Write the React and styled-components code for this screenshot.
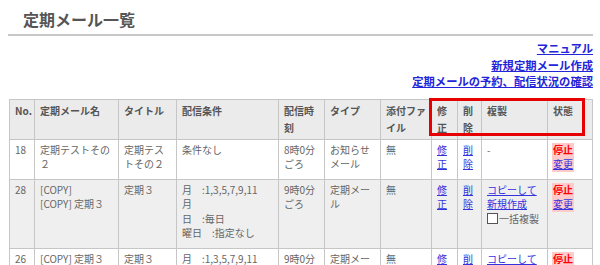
import React from 'react'
import styled, { createGlobalStyle } from 'styled-components'

const GlobalStyle = createGlobalStyle`
  body {
    margin: 0;
    background: #fff;
    font-family: "Noto Sans CJK JP", "Noto Sans", sans-serif;
  }
`

const Page = styled.div`
  width: 600px;
  padding: 0 7px 0 8px;
  box-sizing: border-box;
`

const Title = styled.h1`
  margin: 0;
  padding: 8px 0 4px 15px;
  font-size: 16px;
  line-height: 22px;
  font-weight: 700;
  color: #555;
  border-bottom: 2px solid #c8c8c8;
`

const LinkList = styled.div`
  margin-top: 4px;
  display: flex;
  flex-direction: column;
  align-items: flex-end;
`

const TopLink = styled.a`
  font-size: 11.3px;
  line-height: 16.5px;
  font-weight: 700;
  color: #2424d8;
  text-decoration: underline;
`

const TableWrap = styled.div`
  position: relative;
  margin: 9px 0 0 1px;
`

const Table = styled.table`
  width: 583px;
  table-layout: fixed;
  border-collapse: collapse;
  font-size: 10px;
`

const Row = styled.tr`
  height: ${p => p.$h}px;
  background: ${p => (p.$alt ? '#efefef' : '#fff')};
`

const Th = styled.th`
  background: #ebebeb;
  border: 1px solid #c6c6c6;
  padding: 2px 5px 3px;
  text-align: left;
  vertical-align: top;
  line-height: 17px;
  font-weight: 700;
  color: #555;
`

const Td = styled.td`
  border: 1px solid #c6c6c6;
  padding: ${p => (p.$tight ? '3px 4px' : '3px 5px')};
  vertical-align: top;
  line-height: 14.5px;
  color: #666;
  word-break: break-all;
`

const CellLink = styled.a`
  color: #3333dd;
  text-decoration: underline;
`

const CopyCheck = styled.label`
  display: flex;
  align-items: center;
  color: #666;
`

const Box = styled.span`
  display: inline-block;
  width: 9px;
  height: 9px;
  border: 1px solid #555;
  background: #fff;
  margin-right: 1px;
`

const StateBox = styled.div`
  display: inline-block;
  background: #ffcaca;
  padding: 0 1px;
`

const Stop = styled.div`
  color: #f00;
  font-weight: 700;
`

const Highlight = styled.div`
  position: absolute;
  left: 420px;
  top: -1px;
  width: 156px;
  height: 38px;
  box-sizing: border-box;
  border: 3px solid #e60000;
  pointer-events: none;
`

const widths = [25, 84, 58, 102, 46, 56, 51, 26, 24, 66, 45]
const heads = ['No.', '定期メール名', 'タイトル', '配信条件', '配信時刻', 'タイプ', '添付ファイル', '修正', '削除', '複製', '状態']

const State = () => (
  <StateBox>
    <Stop>停止</Stop>
    <CellLink href="#">変更</CellLink>
  </StateBox>
)

const CopyCell = () => (
  <>
    <CellLink href="#">コピーして新規作成</CellLink>
    <CopyCheck>
      <Box />
      一括複製
    </CopyCheck>
  </>
)

const Schedule = () => (
  <>
    月　:1,3,5,7,9,11<br />
    月<br />
    日　:毎日<br />
    曜日　:指定なし
  </>
)

export default function App() {
  return (
    <Page>
      <GlobalStyle />
      <Title>定期メール一覧</Title>
      <LinkList>
        <TopLink href="#">マニュアル</TopLink>
        <TopLink href="#">新規定期メール作成</TopLink>
        <TopLink href="#">定期メールの予約、配信状況の確認</TopLink>
      </LinkList>
      <TableWrap>
        <Table>
          <colgroup>
            {widths.map((w, i) => (
              <col key={i} style={{ width: w }} />
            ))}
          </colgroup>
          <thead>
            <Row $h={39}>
              {heads.map(h => (
                <Th key={h}>{h}</Th>
              ))}
            </Row>
          </thead>
          <tbody>
            <Row $h={40}>
              <Td>18</Td>
              <Td>定期テストその２</Td>
              <Td>定期テストその２</Td>
              <Td>条件なし</Td>
              <Td>8時0分ごろ</Td>
              <Td>お知らせメール</Td>
              <Td>無</Td>
              <Td><CellLink href="#">修正</CellLink></Td>
              <Td><CellLink href="#">削除</CellLink></Td>
              <Td>-</Td>
              <Td $tight><State /></Td>
            </Row>
            <Row $h={69} $alt>
              <Td>28</Td>
              <Td>[COPY]<br />[COPY] 定期３</Td>
              <Td>定期３</Td>
              <Td><Schedule /></Td>
              <Td>9時0分ごろ</Td>
              <Td>定期メール</Td>
              <Td>無</Td>
              <Td><CellLink href="#">修正</CellLink></Td>
              <Td><CellLink href="#">削除</CellLink></Td>
              <Td><CopyCell /></Td>
              <Td $tight><State /></Td>
            </Row>
            <Row $h={69}>
              <Td>26</Td>
              <Td>[COPY] 定期３</Td>
              <Td>定期３</Td>
              <Td><Schedule /></Td>
              <Td>9時0分ごろ</Td>
              <Td>定期メール</Td>
              <Td>無</Td>
              <Td><CellLink href="#">修正</CellLink></Td>
              <Td><CellLink href="#">削除</CellLink></Td>
              <Td><CopyCell /></Td>
              <Td $tight><State /></Td>
            </Row>
          </tbody>
        </Table>
        <Highlight />
      </TableWrap>
    </Page>
  )
}
